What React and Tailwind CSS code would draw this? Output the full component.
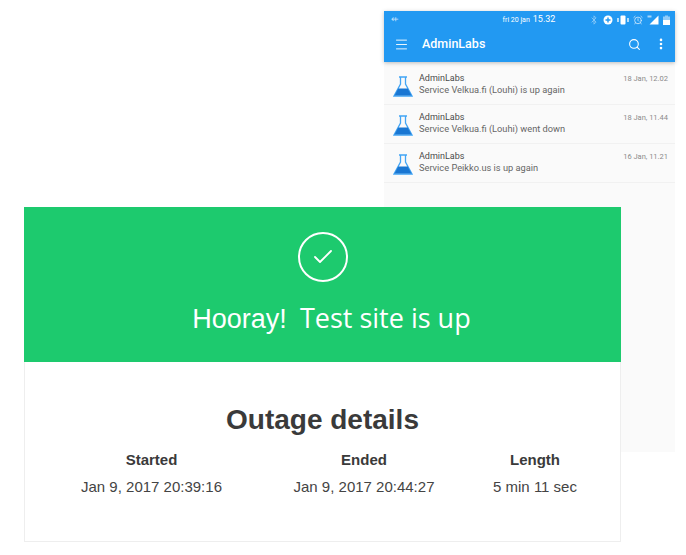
import React from 'react';
import { Menu, Search, EllipsisVertical, Bluetooth, AlarmClock, Check } from 'lucide-react';

const notifications = [
  { text: 'Service Velkua.fi (Louhi) is up again', time: '18 Jan, 12.02' },
  { text: 'Service Velkua.fi (Louhi) went down', time: '18 Jan, 11.44' },
  { text: 'Service Peikko.us is up again', time: '16 Jan, 11.21' },
];

const details = [
  { label: 'Started', value: 'Jan 9, 2017 20:39:16', width: 'w-[213px]' },
  { label: 'Ended', value: 'Jan 9, 2017 20:44:27', width: 'w-[212px]' },
  { label: 'Length', value: '5 min 11 sec', width: 'w-[130px]' },
];

const Flask = () => (
  <svg width="20" height="21" viewBox="0 0 20 21" className="shrink-0">
    <path d="M6 1h8M7.500 1v7L1 20h18L12.500 8V1" fill="none" stroke="#42a5f5" strokeWidth="1.300" />
    <path d="M5.200 12.500h9.600L18.500 19.500H1.500z" fill="#1976d2" />
  </svg>
);

const StatusIcons = () => (
  <div className="flex items-center gap-[4px] text-white">
    <Bluetooth size={10} strokeWidth={2} className="opacity-50" />
    <svg width="10" height="10" viewBox="0 0 10 10">
      <circle cx="5" cy="5" r="4.500" fill="white" />
      <path d="M5 2.500v5M2.500 5h5" stroke="#2299f2" strokeWidth="1.400" />
    </svg>
    <svg width="12" height="10" viewBox="0 0 12 10">
      <rect x="3.500" y="0.500" width="5" height="9" rx="1" fill="white" />
      <path d="M1 3v4M11 3v4" stroke="white" strokeWidth="1.300" />
    </svg>
    <AlarmClock size={10} strokeWidth={2} className="opacity-80" />
    <svg width="12" height="10" viewBox="0 0 12 10">
      <path d="M11.500 0.500v9H2.500z" fill="white" />
      <path d="M0.500 0.500h4v2h-4z" fill="white" opacity="0.600" />
    </svg>
    <svg width="7" height="10" viewBox="0 0 7 10">
      <path d="M2 0.500h3v1h2v8.500H0V1.500h2z" fill="white" opacity="0.500" />
      <path d="M0 5h7v5H0z" fill="white" />
    </svg>
  </div>
);

const App = () => {
  return (
    <div className="relative w-[686px] h-[555px] bg-white overflow-hidden">
      {/* phone screenshot behind the card */}
      <div className="ml-[384px] pt-[11px] w-[291px] font-['Roboto',sans-serif]">
        <div className="h-[441px] bg-[#fafafa]">
          <div className="bg-[#2299f2] text-white h-[51px] shadow-[0_1px_4px_rgba(0,0,0,0.25)] relative">
            <div className="flex items-center justify-between h-[17px] pl-[7px] pr-[5px]">
              <span className="text-[9px] leading-none opacity-70 w-[90px]">⇷</span>
              <span className="flex items-baseline gap-[3px] leading-none -ml-[12px]">
                <span className="text-[7px]">fri 20 jan</span>
                <span className="text-[9px]">15.32</span>
              </span>
              <StatusIcons />
            </div>
            <div className="flex items-center h-[34px] pl-[10px] pr-[7px] -mt-[1px]">
              <Menu size={15} strokeWidth={1.6} className="opacity-90" />
              <span className="ml-[13px] text-[12.500px] font-medium flex-1">AdminLabs</span>
              <Search size={13} strokeWidth={2} />
              <EllipsisVertical size={14} strokeWidth={2.500} className="ml-[13px]" />
            </div>
          </div>
          <div className="pt-[4px]">
            {notifications.map((n) => (
              <div key={n.time} className="flex items-start h-[39px] pl-[9px] pr-[7px] pt-[10px] border-b border-[#f1f1f1]">
                <Flask />
                <div className="ml-[6px] flex-1 -mt-[3px]">
                  <div className="flex justify-between text-[#4a4a4a] leading-[11px]">
                    <span className="text-[9px]">AdminLabs</span>
                    <span className="text-[#8a8a8a] text-[7.500px]">{n.time}</span>
                  </div>
                  <div className="text-[#666] text-[9.250px] leading-[11px]">{n.text}</div>
                </div>
              </div>
            ))}
          </div>
        </div>
      </div>

      {/* status card sits over the phone */}
      <div className="absolute left-[24px] top-[207px] w-[597px] h-[335px] bg-white border border-t-0 border-[#eeeeee] flex flex-col font-['Liberation_Sans',sans-serif]">
        <div className="-mx-px h-[155px] bg-[#1dca6e] flex flex-col items-center text-white">
          <div className="mt-[25px] w-[50px] h-[50px] rounded-full border-2 border-white flex items-center justify-center">
            <Check size={24} strokeWidth={1.800} />
          </div>
          <div className="mt-[17px] ml-[18px] flex items-baseline gap-[13px] leading-[38px] whitespace-nowrap">
            <span className="text-[27px]">Hooray!</span>
            <span className="text-[27px] font-['Open_Sans',sans-serif]">Test site is up</span>
          </div>
        </div>
        <div className="flex-1 text-[#3a3a3a]">
          <h2 className="mt-[40px] text-center text-[28px] leading-[36px] font-bold">Outage details</h2>
          <div className="flex mt-[10px] ml-[20px]">
            {details.map((d) => (
              <div key={d.label} className={`${d.width} text-center shrink-0`}>
                <div className="text-[15px] leading-[24px] font-bold">{d.label}</div>
                <div className="text-[15px] leading-[30px] text-[#444]">{d.value}</div>
              </div>
            ))}
          </div>
        </div>
      </div>
    </div>
  );
};

export default App;
